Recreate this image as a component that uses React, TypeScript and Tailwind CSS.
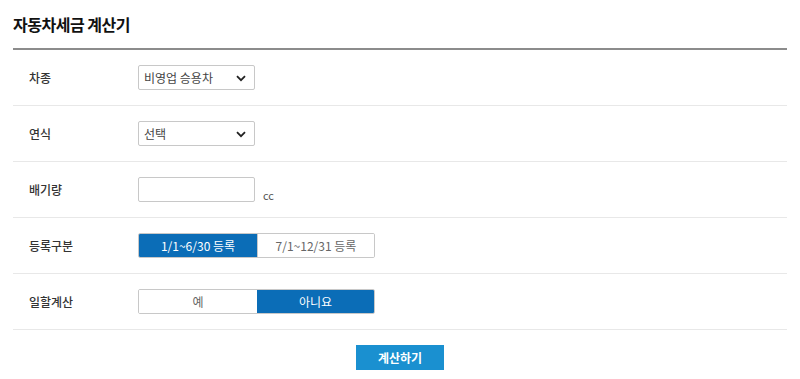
const font = { fontFamily: '"Noto Sans CJK KR", "Noto Sans", sans-serif' };

const Chevron = () => (
  <svg width="10" height="7" viewBox="0 0 10 7" className="absolute right-[8px] top-[9px]">
    <path d="M1 1.2 L5 5.2 L9 1.2" fill="none" stroke="#222" strokeWidth="1.8" />
  </svg>
);

const Select = ({ value }: { value: string }) => (
  <div className="relative w-[117px] h-[25px] border border-[#c8c8c8] rounded-[2px] bg-white pl-[5px] text-[12px] leading-[23px] text-[#444]">
    {value}
    <Chevron />
  </div>
);

interface Props {
  left: string;
  right: string;
  active: 0 | 1;
}

const Toggle = ({ left, right, active }: Props) => (
  <div className="flex w-[237px] h-[25px] border border-[#c8c8c8] rounded-[2px] overflow-hidden text-[12px] leading-[23px]">
    <div className={active === 0 ? "w-[118px] text-center bg-[#0b6db7] text-white" : "w-[118px] text-center bg-white text-[#666]"}>{left}</div>
    <div className={active === 1 ? "flex-1 text-center bg-[#0b6db7] text-white" : "flex-1 text-center bg-white text-[#666] border-l border-[#c8c8c8]"}>{right}</div>
  </div>
);

const Row = ({ label, children }: { label: string; children: React.ReactNode }) => (
  <div className="flex items-center h-[56px] border-b border-[#e8e8e8]">
    <div className="w-[125px] pl-[16px] text-[12px] font-medium text-[#333]">{label}</div>
    {children}
  </div>
);

export default function App() {
  return (
    <div className="w-[800px] h-[379px] bg-white px-[13px] pt-[13px]" style={font}>
      <h1 className="text-[16px] font-bold text-[#111] leading-[22px] h-[23px] tracking-[-0.5px]">자동차세금 계산기</h1>
      <div className="mt-[12px] border-t-2 border-[#8c8c8c]">
        <Row label="차종"><Select value="비영업 승용차" /></Row>
        <Row label="연식"><Select value="선택" /></Row>
        <Row label="배기량">
          <div className="flex items-end">
            <div className="w-[117px] h-[25px] border border-[#c8c8c8] rounded-[2px] bg-white" />
            <span className="ml-[8px] text-[11px] text-[#555] leading-[14px]">cc</span>
          </div>
        </Row>
        <Row label="등록구분"><Toggle left="1/1~6/30 등록" right="7/1~12/31 등록" active={0} /></Row>
        <Row label="일할계산"><Toggle left="예" right="아니요" active={1} /></Row>
      </div>
      <div className="flex justify-center mt-[15px]">
        <button className="w-[88px] h-[25px] bg-[#1a90d0] text-white text-[12px] font-bold">계산하기</button>
      </div>
    </div>
  );
}
